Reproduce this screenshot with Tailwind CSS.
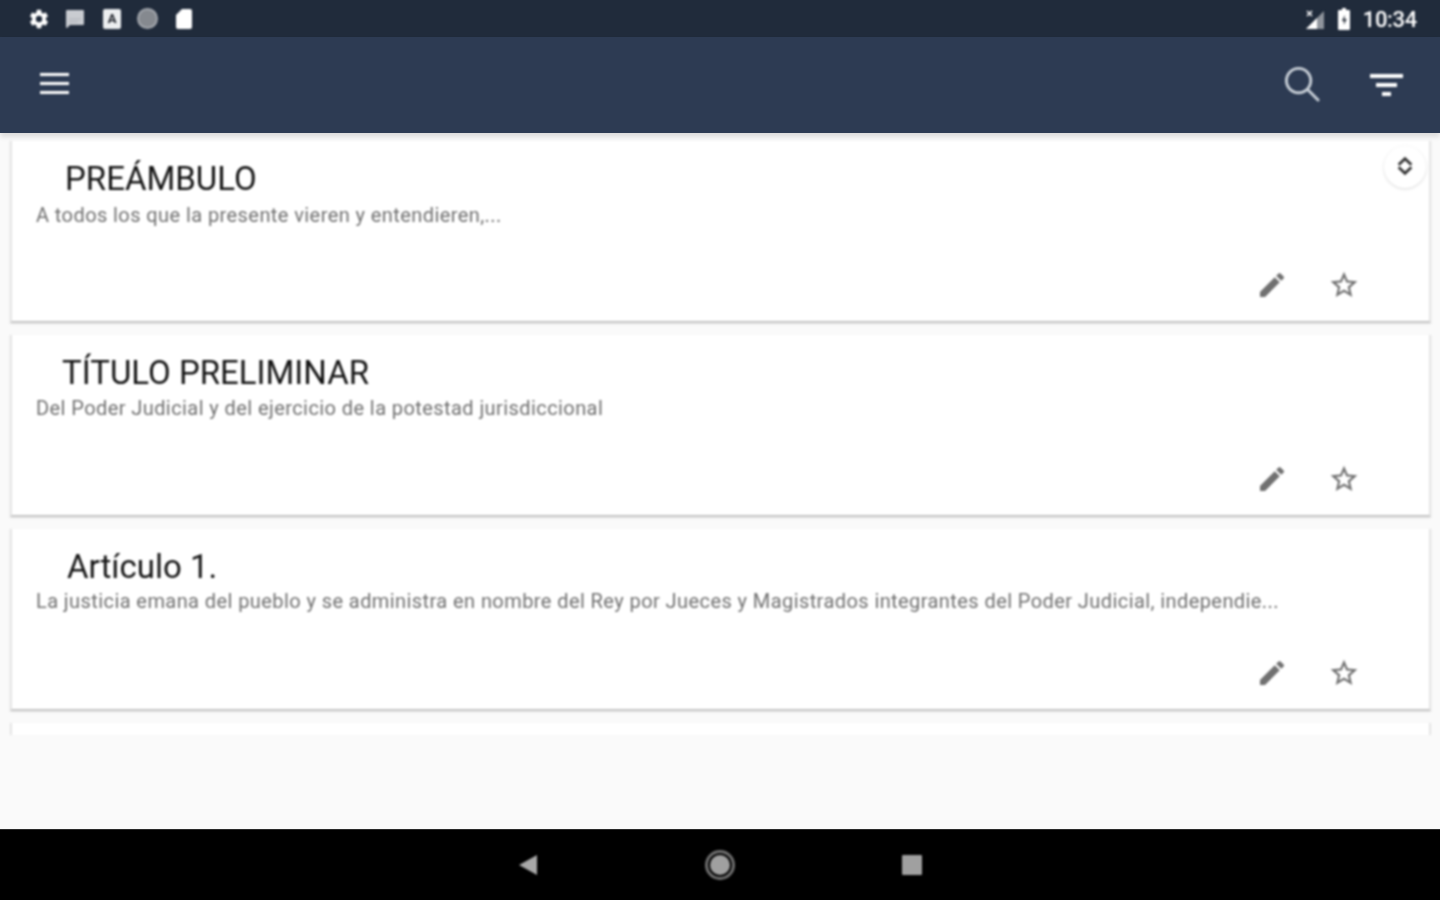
<!DOCTYPE html>
<html lang="es">
<head>
    <meta charset="UTF-8" />
    <meta name="viewport" content="width=device-width, initial-scale=1.0" />
    <title>Ley Orgánica</title>
    <script src="https://cdn.jsdelivr.net/npm/@tailwindcss/browser@4"></script>
</head>
<body class="bg-[#fafafa] h-screen overflow-hidden flex flex-col font-['Roboto',sans-serif]">
    <!-- status bar -->
    <div class="h-[37px] bg-[#202b3b] flex items-center justify-between pl-[28px] pr-[23px] shrink-0">
        <div class="flex items-center blur-[0.8px]">
            <svg class="w-[22px] h-[22px]" viewBox="0 0 24 24" fill="#fff"><path d="M19.4 13c.04-.32.07-.65.07-1s-.03-.68-.07-1l2.1-1.65c.2-.15.25-.42.12-.64l-2-3.46c-.12-.22-.38-.3-.6-.22l-2.5 1c-.52-.4-1.08-.73-1.69-.98l-.38-2.65A.49.49 0 0 0 14 2h-4c-.25 0-.46.18-.49.42l-.38 2.65c-.61.25-1.17.59-1.69.98l-2.5-1c-.23-.09-.48 0-.6.22l-2 3.46c-.13.22-.07.49.12.64L4.57 11c-.04.32-.07.66-.07 1s.03.68.07 1l-2.11 1.65c-.19.15-.25.42-.12.64l2 3.46c.12.22.38.3.6.22l2.5-1c.52.4 1.08.73 1.69.98l.38 2.65c.03.24.24.42.49.42h4c.25 0 .46-.18.49-.42l.38-2.65c.61-.25 1.17-.59 1.69-.98l2.5 1c.23.09.48 0 .6-.22l2-3.46c.12-.22.07-.49-.12-.64L19.4 13zM12 15.5a3.5 3.5 0 1 1 0-7 3.5 3.5 0 0 1 0 7z"/></svg>
            <svg class="w-[22px] h-[22px] ml-[14px]" viewBox="0 0 22 22"><path d="M3 2h16a1 1 0 0 1 1 1v13a1 1 0 0 1-1 1H6l-3 3a1 1 0 0 1-1-1V3a1 1 0 0 1 1-1z" fill="#c9ccd1"/><path d="M5 11h12M5 14h9" stroke="#aeb2b8" stroke-width="1"/></svg>
            <div class="w-[18px] h-[20px] bg-[#eceef0] rounded-[2px] flex items-center justify-center ml-[17px]">
                <span class="text-[13px] font-bold text-[#20242c] leading-none">A</span>
            </div>
            <div class="w-[21px] h-[21px] rounded-full bg-[#85898f] border-2 border-[#a4a8ae] ml-[16px]"></div>
            <svg class="w-[20px] h-[22px] ml-[16px]" viewBox="0 0 20 22" fill="#fff"><path d="M8 1h8a2 2 0 0 1 2 2v16a2 2 0 0 1-2 2H4a2 2 0 0 1-2-2V7z"/></svg>
        </div>
        <div class="flex items-center blur-[0.8px]">
            <svg class="w-[22px] h-[22px]" viewBox="0 0 22 22"><path d="M20 3v18H2z" fill="#8f949c"/><path d="M2 21 13 10v11z" fill="#fff"/><path d="M3 3l5 5M8 3 3 8" stroke="#fff" stroke-width="1.6"/></svg>
            <svg class="w-[14px] h-[24px] ml-[11px]" viewBox="0 0 14 24"><path d="M5 1h4v2h3a1 1 0 0 1 1 1v18a1 1 0 0 1-1 1H2a1 1 0 0 1-1-1V4a1 1 0 0 1 1-1h3z" fill="#fff"/><path d="M7.8 8 4.8 14h2v4l3-6h-2z" fill="#3a404a"/></svg>
            <span class="text-[22px] font-medium tracking-[-0.3px] text-white ml-[12px] mt-[2px] leading-none">10:34</span>
        </div>
    </div>

    <!-- toolbar -->
    <header class="h-[96px] bg-[#2d3b53] flex items-center justify-between pl-[40px] pr-[37px] pb-[3px] shrink-0 shadow-[0_4px_5px_rgba(0,0,0,0.12)] relative z-10">
        <div class="w-[29px] flex flex-col gap-[6px] blur-[0.8px]">
            <div class="h-[3px] bg-white"></div>
            <div class="h-[3px] bg-white"></div>
            <div class="h-[3px] bg-white"></div>
        </div>
        <div class="flex items-center gap-[50px] blur-[0.8px]">
            <svg class="w-[37px] h-[37px] -ml-[2px]" viewBox="0 0 38 38" fill="none" stroke="#c9d0d8" stroke-width="3"><circle cx="16" cy="16" r="12.5"/><path d="m25 25 11 11" stroke-linecap="round"/></svg>
            <div class="w-[33px] flex flex-col items-center gap-[5px] mt-[2px]">
                <div class="h-[4px] w-full bg-white"></div>
                <div class="h-[4px] w-[21px] bg-white"></div>
                <div class="h-[4px] w-[9px] bg-white"></div>
            </div>
        </div>
    </header>

    <main class="flex-1 min-h-0">
        <div class="h-[602px] overflow-hidden pt-[8px] pl-[10px] pr-[9px] flex flex-col gap-[12px] blur-[0.8px]">
            <article class="relative h-[182px] shrink-0 bg-white border-x-2 border-[#e4e4e4] border-b-2 border-b-[#c4c4c4] shadow-[0_1px_2px_rgba(0,0,0,0.08)] pl-[24px] pt-[19px]">
                <h2 class="text-[33px] leading-[38px] text-[#141414] pl-[29px]">PREÁMBULO</h2>
                <p class="text-[20px] tracking-[0.42px] leading-[24px] mt-[5px] text-[#707070]">A todos los que la presente vieren y entendieren,...</p>
                <div class="absolute right-[3px] top-[5px] w-[42px] h-[42px] rounded-full bg-white shadow-[0_1px_3px_rgba(0,0,0,0.15)] flex items-center justify-center">
                    <svg class="w-[20px] h-[20px] -mt-[3px]" viewBox="0 0 22 22" fill="none" stroke="#333" stroke-width="3"><path d="M4 9.5 11 3l7 6.5M4 12.5 11 19l7-6.5"/></svg>
                </div>
                <div class="absolute right-[69px] bottom-[20px] flex items-center gap-[40px]">
                    <svg class="w-[32px] h-[32px]" viewBox="0 0 24 24" fill="#707070"><path d="M3 17.25V21h3.75L17.81 9.94l-3.75-3.75L3 17.25zM20.71 7.04a1 1 0 0 0 0-1.41l-2.34-2.34a1 1 0 0 0-1.41 0l-1.83 1.83 3.75 3.75 1.83-1.83z"/></svg>
                    <svg class="w-[32px] h-[32px]" viewBox="0 0 24 24" fill="#707070"><path d="m22 9.24-7.19-.62L12 2 9.19 8.63 2 9.24l5.46 4.73L5.82 21 12 17.27 18.18 21l-1.63-7.03L22 9.24zM12 15.4l-3.76 2.27 1-4.28-3.32-2.88 4.38-.38L12 6.1l1.71 4.04 4.38.38-3.32 2.88 1 4.28L12 15.4z"/></svg>
                </div>
            </article>
            <article class="relative h-[182px] shrink-0 bg-white border-x-2 border-[#e4e4e4] border-b-2 border-b-[#c4c4c4] shadow-[0_1px_2px_rgba(0,0,0,0.08)] pl-[24px] pt-[19px]">
                <h2 class="text-[33px] leading-[38px] text-[#141414] pl-[26px]">TÍTULO PRELIMINAR</h2>
                <p class="text-[20px] tracking-[0.42px] leading-[24px] mt-[4px] text-[#707070]">Del Poder Judicial y del ejercicio de la potestad jurisdiccional</p>
                <div class="absolute right-[69px] bottom-[20px] flex items-center gap-[40px]">
                    <svg class="w-[32px] h-[32px]" viewBox="0 0 24 24" fill="#707070"><path d="M3 17.25V21h3.75L17.81 9.94l-3.75-3.75L3 17.25zM20.71 7.04a1 1 0 0 0 0-1.41l-2.34-2.34a1 1 0 0 0-1.41 0l-1.83 1.83 3.75 3.75 1.83-1.83z"/></svg>
                    <svg class="w-[32px] h-[32px]" viewBox="0 0 24 24" fill="#707070"><path d="m22 9.24-7.19-.62L12 2 9.19 8.63 2 9.24l5.46 4.73L5.82 21 12 17.27 18.18 21l-1.63-7.03L22 9.24zM12 15.4l-3.76 2.27 1-4.28-3.32-2.88 4.38-.38L12 6.1l1.71 4.04 4.38.38-3.32 2.88 1 4.28L12 15.4z"/></svg>
                </div>
            </article>
            <article class="relative h-[182px] shrink-0 bg-white border-x-2 border-[#e4e4e4] border-b-2 border-b-[#c4c4c4] shadow-[0_1px_2px_rgba(0,0,0,0.08)] pl-[24px] pt-[19px]">
                <h2 class="text-[33px] leading-[38px] text-[#141414] pl-[31px]">Artículo 1.</h2>
                <p class="text-[20px] tracking-[0.42px] leading-[24px] mt-[3px] text-[#707070]">La justicia emana del pueblo y se administra en nombre del Rey por Jueces y Magistrados integrantes del Poder Judicial, independie...</p>
                <div class="absolute right-[69px] bottom-[20px] flex items-center gap-[40px]">
                    <svg class="w-[32px] h-[32px]" viewBox="0 0 24 24" fill="#707070"><path d="M3 17.25V21h3.75L17.81 9.94l-3.75-3.75L3 17.25zM20.71 7.04a1 1 0 0 0 0-1.41l-2.34-2.34a1 1 0 0 0-1.41 0l-1.83 1.83 3.75 3.75 1.83-1.83z"/></svg>
                    <svg class="w-[32px] h-[32px]" viewBox="0 0 24 24" fill="#707070"><path d="m22 9.24-7.19-.62L12 2 9.19 8.63 2 9.24l5.46 4.73L5.82 21 12 17.27 18.18 21l-1.63-7.03L22 9.24zM12 15.4l-3.76 2.27 1-4.28-3.32-2.88 4.38-.38L12 6.1l1.71 4.04 4.38.38-3.32 2.88 1 4.28L12 15.4z"/></svg>
                </div>
            </article>
            <article class="h-[182px] shrink-0 bg-white border-x-2 border-[#e4e4e4]"></article>
        </div>
    </main>

    <!-- android nav bar -->
    <nav class="h-[71px] bg-black shrink-0 flex items-center justify-center gap-[167px] border-t border-t-[#2a2a2a]">
        <svg class="w-[20px] h-[22px] blur-[0.8px]" viewBox="0 0 20 22" fill="#a8a8a8"><path d="M19 1v20L1 11z"/></svg>
        <div class="w-[30px] h-[30px] rounded-full border-[3px] border-[#707070] flex items-center justify-center blur-[0.8px]">
            <div class="w-[20px] h-[20px] rounded-full bg-[#a0a0a0]"></div>
        </div>
        <div class="w-[20px] h-[20px] bg-[#a0a0a0] rounded-[1px] blur-[0.8px]"></div>
    </nav>
</body>
</html>
